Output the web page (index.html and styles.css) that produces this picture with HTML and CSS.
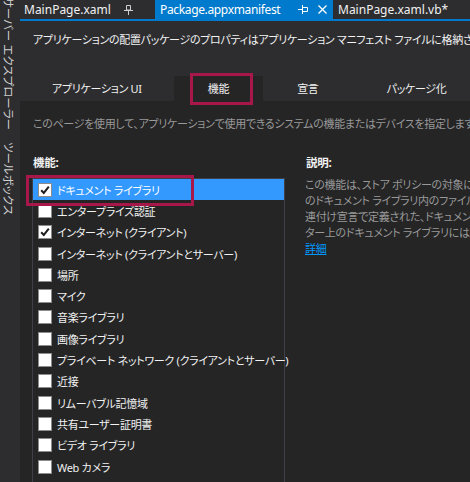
FILE: index.html
```html
<!DOCTYPE html>
<html lang="ja">
<head>
<meta charset="utf-8">
<title>Package.appxmanifest</title>
<link rel="stylesheet" href="styles.css">
</head>
<body>
<div class="app">
  <aside class="sidebar">
    <span class="side-item">サーバー エクスプローラー</span>
    <span class="side-item">ツールボックス</span>
  </aside>
  <div class="main">
    <div class="doc-tabs">
      <div class="doc-tab tab-a">
        <span class="doc-title">MainPage.xaml</span>
        <svg class="icon pin" width="9" height="10" viewBox="0 0 9 10"><path d="M2.5 0.5h4v4.5h-4z M0 5.5h9 M4.5 5.5v4.5" fill="none" stroke="#d0d0d0" stroke-width="1"/></svg>
      </div>
      <div class="doc-tab tab-b">
        <span class="doc-title">Package.appxmanifest</span>
        <svg class="icon pin-h" width="10" height="9" viewBox="0 0 10 9"><path d="M0 4.5h4 M4.5 0v9 M4.5 2.5h5v4h-5" fill="none" stroke="#ffffff" stroke-width="1"/></svg>
        <svg class="icon close" width="9" height="9" viewBox="0 0 9 9"><path d="M0.5 0.5l8 8 M8.5 0.5l-8 8" fill="none" stroke="#ffffff" stroke-width="1.3"/></svg>
      </div>
      <div class="doc-tab tab-c">
        <span class="doc-title">MainPage.xaml.vb*</span>
      </div>
    </div>
    <div class="header">
      <p class="intro">アプリケーションの配置パッケージのプロパティはアプリケーション マニフェスト ファイルに格納されます。</p>
      <div class="page-tabs">
        <div class="page-tab first">アプリケーション UI</div>
        <div class="page-tab selected">機能<span class="tab-highlight"></span></div>
        <div class="page-tab">宣言</div>
        <div class="page-tab">パッケージ化</div>
      </div>
    </div>
    <div class="content">
      <p class="hint">このページを使用して、アプリケーションで使用できるシステムの機能またはデバイスを指定します。</p>
      <div class="columns">
        <section class="cap-col">
          <h3 class="label">機能:</h3>
          <ul class="cap-list">
            <li class="cap selected"><span class="box checked"><svg width="12" height="12" viewBox="0 0 12 12"><path d="M2.2 6.2l2.6 2.7 5-6.2" fill="none" stroke="#1e1e1e" stroke-width="2"/></svg></span>ドキュメント ライブラリ</li>
            <li class="cap"><span class="box"></span>エンタープライズ認証</li>
            <li class="cap"><span class="box checked"><svg width="12" height="12" viewBox="0 0 12 12"><path d="M2.2 6.2l2.6 2.7 5-6.2" fill="none" stroke="#1e1e1e" stroke-width="2"/></svg></span>インターネット (クライアント)</li>
            <li class="cap"><span class="box"></span>インターネット (クライアントとサーバー)</li>
            <li class="cap"><span class="box"></span>場所</li>
            <li class="cap"><span class="box"></span>マイク</li>
            <li class="cap"><span class="box"></span>音楽ライブラリ</li>
            <li class="cap"><span class="box"></span>画像ライブラリ</li>
            <li class="cap"><span class="box"></span>プライベート ネットワーク (クライアントとサーバー)</li>
            <li class="cap"><span class="box"></span>近接</li>
            <li class="cap"><span class="box"></span>リムーバブル記憶域</li>
            <li class="cap"><span class="box"></span>共有ユーザー証明書</li>
            <li class="cap"><span class="box"></span>ビデオ ライブラリ</li>
            <li class="cap"><span class="box"></span>Web カメラ</li>
            <li class="row-highlight"></li>
          </ul>
        </section>
        <section class="desc-col">
          <h3 class="label">説明:</h3>
          <div class="desc">
            <div class="desc-line">この機能は、ストア ポリシーの対象になります。ユーザー</div>
            <div class="desc-line">のドキュメント ライブラリ内のファイルを提供し、ファイルの種類の関</div>
            <div class="desc-line">連付け宣言で定義された、ドキュメント ライブラリ内のファイルにアクセスできます。コンピュー</div>
            <div class="desc-line">ター上のドキュメント ライブラリにはアクセスできません。</div>
          </div>
          <a class="more" href="#">詳細</a>
        </section>
      </div>
    </div>
  </div>
</div>
</body>
</html>
```

FILE: styles.css
```css
* { box-sizing: border-box; }

html, body {
  margin: 0;
  padding: 0;
}

body {
  background: #2d2d30;
  color: #f1f1f1;
  font-family: "Noto Sans", "Noto Sans CJK JP", sans-serif;
  font-feature-settings: "palt";
  font-size: 11px;
  letter-spacing: -0.3px;
  width: 470px;
  height: 482px;
  overflow: hidden;
}

.app {
  display: flex;
  width: 470px;
  height: 482px;
  overflow: hidden;
}

/* vertical side tool-window tabs */
.sidebar {
  width: 20px;
  flex: none;
  writing-mode: vertical-rl;
  text-orientation: sideways;
  display: flex;
  gap: 12px;
  margin-top: -3px;
  padding-right: 3px;
  color: #d0d0d0;
  font-size: 11.5px;
  letter-spacing: 0;
  line-height: 17px;
  white-space: nowrap;
}

.main {
  flex: 1;
  min-width: 0;
  display: flex;
  flex-direction: column;
}

/* document tabs */
.doc-tabs {
  display: flex;
  height: 21px;
  border-bottom: 2px solid #007acc;
  font-size: 12px;
  letter-spacing: 0;
  line-height: 19px;
  white-space: nowrap;
  color: #f1f1f1;
}

.doc-tab {
  display: flex;
  align-items: center;
  height: 19px;
  padding-left: 4px;
  flex: none;
}

.tab-a { width: 135px; }
.tab-a .pin { margin-left: 13px; }

.tab-b {
  width: 178px;
  padding-left: 5px;
  background: #007acc;
  color: #ffffff;
}
.tab-b .doc-title {
  flex: 1;
  letter-spacing: -0.35px;
}
.tab-b .pin-h { margin-left: 6px; }
.tab-b .close { margin-left: 10px; margin-right: 6px; }

.tab-c { padding-left: 5px; }

.icon { display: block; flex: none; }

/* header with property tabs */
.header {
  padding-top: 11px;
}

.intro {
  margin: 0 0 0 13px;
  line-height: 16px;
  white-space: nowrap;
  color: #f1f1f1;
}

.page-tabs {
  display: flex;
  margin-top: 28px;
  height: 25px;
  white-space: nowrap;
}

.page-tab {
  position: relative;
  padding: 0 34px;
  line-height: 25px;
  color: #f1f1f1;
  flex: none;
}

.page-tab.first {
  padding: 0 32px;
}

.page-tab.selected {
  background: #252526;
}

.tab-highlight {
  position: absolute;
  left: 16px;
  top: -3px;
  width: 63px;
  height: 32px;
  border: 3px solid #a8174a;
}

/* capabilities page */
.content {
  flex: 1;
  background: #252526;
  padding: 15px 0 0 12px;
  min-width: 0;
}

.hint {
  margin: 0 0 0 1px;
  line-height: 16px;
  color: #999999;
  white-space: nowrap;
}

.columns {
  display: flex;
  margin-top: 23px;
}

.label {
  margin: 0 0 7px 1px;
  font-size: 11.5px;
  font-weight: bold;
  line-height: 16px;
  color: #f1f1f1;
}

.cap-col {
  width: 253px;
  flex: none;
}

.cap-list {
  position: relative;
  list-style: none;
  margin: 0;
  padding: 0;
  border: 1px solid #3f3f46;
  border-bottom: none;
  height: 310px;
}

.cap {
  display: flex;
  align-items: center;
  gap: 5px;
  height: 21.3px;
  padding-left: 5px;
  white-space: nowrap;
  color: #f1f1f1;
}

.cap.selected {
  background: #3399ff;
  color: #ffffff;
}

.box {
  width: 14px;
  height: 14px;
  flex: none;
  background: #ffffff;
  border: 1px solid #8c8c8c;
  display: flex;
  align-items: center;
  justify-content: center;
}

.box svg { display: block; }

.row-highlight {
  position: absolute;
  left: -7px;
  top: -4px;
  width: 168px;
  height: 31px;
  border: 3px solid #a8174a;
}

.desc-col {
  flex: 1;
  min-width: 0;
  margin-left: 20px;
  overflow: hidden;
}

.desc-col .label {
  margin-bottom: 6px;
}

.desc {
  color: #999999;
  line-height: 16px;
}

.desc-line {
  white-space: nowrap;
}

.more {
  display: inline-block;
  line-height: 16px;
  color: #0097fb;
  text-decoration: underline;
}
```
